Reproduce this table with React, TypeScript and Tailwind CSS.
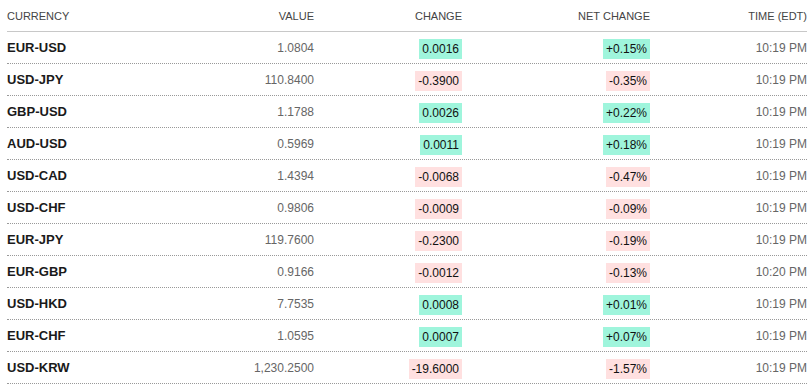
import React from "react";

type Row = {
  pair: string;
  value: string;
  change: string;
  net: string;
  time: string;
};

const rows: Row[] = [
  { pair: "EUR-USD", value: "1.0804", change: "0.0016", net: "+0.15%", time: "10:19 PM" },
  { pair: "USD-JPY", value: "110.8400", change: "-0.3900", net: "-0.35%", time: "10:19 PM" },
  { pair: "GBP-USD", value: "1.1788", change: "0.0026", net: "+0.22%", time: "10:19 PM" },
  { pair: "AUD-USD", value: "0.5969", change: "0.0011", net: "+0.18%", time: "10:19 PM" },
  { pair: "USD-CAD", value: "1.4394", change: "-0.0068", net: "-0.47%", time: "10:19 PM" },
  { pair: "USD-CHF", value: "0.9806", change: "-0.0009", net: "-0.09%", time: "10:19 PM" },
  { pair: "EUR-JPY", value: "119.7600", change: "-0.2300", net: "-0.19%", time: "10:19 PM" },
  { pair: "EUR-GBP", value: "0.9166", change: "-0.0012", net: "-0.13%", time: "10:20 PM" },
  { pair: "USD-HKD", value: "7.7535", change: "0.0008", net: "+0.01%", time: "10:19 PM" },
  { pair: "EUR-CHF", value: "1.0595", change: "0.0007", net: "+0.07%", time: "10:19 PM" },
  { pair: "USD-KRW", value: "1,230.2500", change: "-19.6000", net: "-1.57%", time: "10:19 PM" },
];

const cols = "grid grid-cols-[160px_147px_148px_188px_157px] items-center";

function Pill({ text }: { text: string }) {
  const down = text.startsWith("-");
  return (
    <span
      className={`inline-block px-[3px] leading-[20px] text-[12px] text-[#111] ${
        down ? "bg-[#ffe0e0]" : "bg-[#9ff5dc]"
      }`}
    >
      {text}
    </span>
  );
}

export default function App() {
  return (
    <div className="w-[812px] h-[390px] bg-white pl-[7px] font-['Liberation_Sans',Arial,sans-serif]">
      <div className="w-[800px]">
        {/* header */}
        <div className={`${cols} h-[32px] border-b border-[#c8c8c8] text-[11px] text-[#444] pt-[1px]`}>
          <span>CURRENCY</span>
          <span className="text-right">VALUE</span>
          <span className="text-right">CHANGE</span>
          <span className="text-right">NET CHANGE</span>
          <span className="text-right">TIME (EDT)</span>
        </div>

        {rows.map((r) => (
          <div key={r.pair} className={`${cols} h-[32px] border-b border-dotted border-[#999] pt-[1px]`}>
            <span className="text-[13px] font-bold text-[#1a1a1a]">{r.pair}</span>
            <span className="text-right text-[12px] text-[#666]">{r.value}</span>
            <span className="text-right">
              <Pill text={r.change} />
            </span>
            <span className="text-right">
              <Pill text={r.net} />
            </span>
            <span className="text-right text-[12px] text-[#666]">{r.time}</span>
          </div>
        ))}
      </div>
    </div>
  );
}
